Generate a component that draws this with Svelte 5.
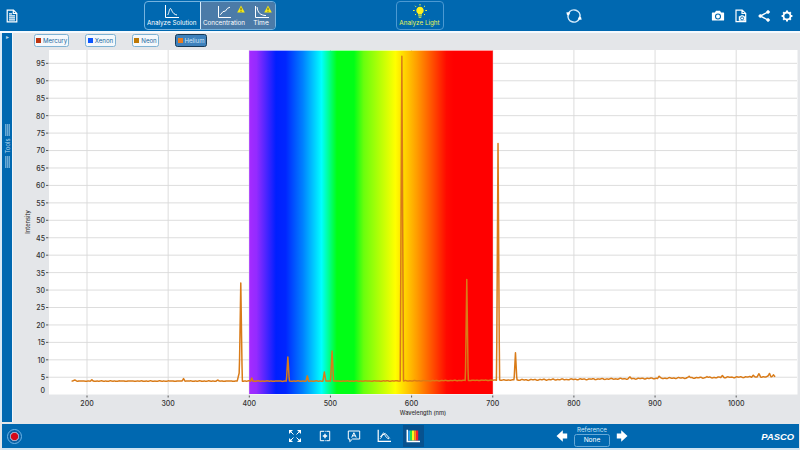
<script lang="ts">
	const series = [
		{ name: 'Mercury', color: '#bd3410', width: 35 },
		{ name: 'Xenon', color: '#0b55ff', width: 31 },
		{ name: 'Neon', color: '#bd7805', width: 27 },
		{ name: 'Helium', color: '#e87b22', width: 32 }
	]
	let selected = $state('Helium')

	const xTicks = [200, 300, 400, 500, 600, 700, 800, 900, 1000]
	const yTicks = Array.from({ length: 19 }, (_, i) => (i + 1) * 5)

	// [wavelength, intensity, half width at the base]
	const peaks = [
		[185, 4.2, 3],
		[206, 4.3, 1.5],
		[319, 4.6, 2],
		[361, 4.2, 2],
		[387.5, 6.2, 2.4],
		[389.5, 32, 1.8],
		[403, 4.8, 1.5],
		[447.5, 10.8, 1.8],
		[471.5, 5.4, 1.5],
		[492.5, 6.5, 1.8],
		[502, 12.5, 1.9],
		[588, 97, 2],
		[668, 33, 1.7],
		[706.5, 72, 1.8],
		[728, 12, 1.7],
		[869, 5.1, 2],
		[905, 5.3, 2],
		[942, 5.3, 2],
		[964, 5.2, 2],
		[983, 5.5, 2],
		[1021, 5.6, 2],
		[1028, 6, 2],
		[1041, 6.1, 2],
		[1046, 5.7, 2]
	]

	const x = (nm: number) => 87 + (nm - 200) * 0.8115
	const y = (value: number) => 394.7 - value * 3.488

	function baseline(nm: number) {
		const rise = nm > 520 ? ((nm - 520) / 530) ** 1.5 * 1.3 : 0
		const noise = Math.sin(nm * 0.83) * Math.sin(nm * 0.31) * (nm > 730 ? 0.16 : 0.08)
		return 3.9 + rise + noise
	}

	function intensity(nm: number) {
		let value = baseline(nm)
		for (const [center, top, half] of peaks) {
			const d = Math.abs(nm - center) / half
			if (d < 1) value = Math.max(value, top - (top - value) * d)
		}
		return value
	}

	const points: string[] = []
	for (let nm = 181; nm <= 1048; nm += 0.5) {
		points.push(`${x(nm).toFixed(2)},${y(intensity(nm)).toFixed(2)}`)
	}
</script>

{#snippet warning()}
	<svg class="warning" viewBox="0 0 8 8">
		<path d="M4 .4 7.8 7.5H.2z" fill="#f5ea18" />
		<path d="M4 2.7v2.5M4 5.9v.8" stroke="#514a0b" stroke-width=".9" />
	</svg>
{/snippet}

<div class="app">
	<header>
		<svg class="page" viewBox="0 0 12 14">
			<path d="M1.2 1.2h6.3l3.3 3.2v8.4H1.2z" />
			<path d="M7.3 1.2v3.3h3.5M3 4.8h3M3 6.8h6M3 8.8h6M3 10.8h6" />
		</svg>
		<nav>
			<button class="solution">
				<svg viewBox="0 0 15 14"><path d="M1.5 0v12.5H15M3.5 10C5 9 5.2 3.5 6.4 3.5S8 9.3 13 10" /></svg>
				<span>Analyze Solution</span>
			</button>
			<button class="concentration">
				<svg viewBox="0 0 15 14"><path d="M1.5 1v11.5H14M3.3 9.8 6 6.6l2.4-.5L10.5 3.3 13 2.2" /></svg>
				<span>Concentration</span>
				{@render warning()}
			</button>
			<button class="time">
				<svg viewBox="0 0 15 14"><path d="M1.5 1v11.5H15M3 2c.8 6 3.2 8.1 9 8.6" /></svg>
				<span>Time</span>
				{@render warning()}
			</button>
		</nav>
		<button class="light">
			<svg viewBox="0 0 14 15">
				<path d="M5 10.5v-1a3.7 3.7 0 1 1 4 0v1z" fill="#fff21c" stroke="none" />
				<path d="M5.2 11.8h3.6M5.7 13.3h2.6M7 0v1.5M2 1.8l1.1 1.1M12 1.8l-1.1 1.1M0 6.5h1.7M12.3 6.5H14M2 11l1.1-1M12 11l-1.1-1" />
			</svg>
			<span>Analyze Light</span>
		</button>
		<svg class="sync" viewBox="0 0 16 16">
			<path d="M2.6 5.4a6 6 0 0 1 11.3 3.8M13.4 10.6A6 6 0 0 1 2.1 6.8" />
			<path d="M.4 4.3 4.2 4.4 3 7.6.9 6.8zM15.6 11.7l-3.8-.1L13 8.4l2.1.8z" fill="#fff" stroke="none" />
		</svg>
		<div class="actions">
			<svg viewBox="0 0 14 14">
				<path d="M1.5 3.4h2.4L5 1.8h4l1.1 1.6h2.4a.6.6 0 0 1 .6.6v7a.6.6 0 0 1-.6.6h-11a.6.6 0 0 1-.6-.6V4a.6.6 0 0 1 .6-.6z" fill="#fff" stroke="none" />
				<circle cx="7" cy="7.5" r="2.5" stroke="#0068b0" stroke-width="1.1" />
			</svg>
			<svg viewBox="0 0 14 14">
				<path d="M5 12.7H2V1.1h6.2l3.5 3.3v8.3H5M8 1.1v3.4h3.7" stroke-width="1.2" />
				<path d="M4.8 7.2h1.5l.6-1h2.4l.6 1h1.6v4.6H4.8z" fill="#fff" stroke="none" />
				<circle cx="8.1" cy="9.4" r="1.5" stroke="#0068b0" stroke-width=".9" />
			</svg>
			<svg viewBox="0 0 14 14">
				<path d="M11 3 3.4 7l7.6 4" stroke-width="1.4" />
				<path d="M11 1.5a1.5 1.5 0 1 0 .1 0zM3.3 5.5a1.5 1.5 0 1 0 .1 0zM11 9.5a1.5 1.5 0 1 0 .1 0z" fill="#fff" stroke-width=".6" />
			</svg>
			<svg viewBox="0 0 14 14">
				<circle cx="7" cy="7" r="3.5" stroke-width="1.8" />
				<path d="M7 1.6v2M7 10.4v2M1.6 7h2M10.4 7h2M3.2 3.2l1.4 1.4M9.4 9.4l1.4 1.4M3.2 10.8l1.4-1.4M9.4 4.6l1.4-1.4" stroke-width="2" />
			</svg>
		</div>
	</header>

	<main>
		<aside>
			<span class="expand">▸</span>
			<div class="handle">
				<i></i>
				<span>Tools</span>
				<i></i>
			</div>
		</aside>
		<section>
			<div class="legend">
				{#each series as item}
					<button
						class:selected={selected === item.name}
						style:width="{item.width}px"
						onclick={() => (selected = item.name)}
					>
						<i style:background-color={item.color}></i>
						{item.name}
					</button>
				{/each}
			</div>
			<svg class="chart" viewBox="13 50 787 373">
				<defs>
					<linearGradient id="visible">
						<stop offset="0" stop-color="#a52bff" />
						<stop offset=".03" stop-color="#942bff" />
						<stop offset=".11" stop-color="#001fff" />
						<stop offset=".15" stop-color="#0026ff" />
						<stop offset=".22" stop-color="#0080ff" />
						<stop offset=".297" stop-color="#00ffff" />
						<stop offset=".36" stop-color="#00ff16" />
						<stop offset=".43" stop-color="#00ff16" />
						<stop offset=".47" stop-color="#69ff0d" />
						<stop offset=".6" stop-color="#ffff00" />
						<stop offset=".69" stop-color="#ff9b00" />
						<stop offset=".81" stop-color="#ff0900" />
						<stop offset=".84" stop-color="#ff0000" />
						<stop offset="1" stop-color="#ff0000" />
					</linearGradient>
				</defs>
				<rect class="plot" x="49" y="50" width="748.5" height="344.5" />
				<g class="grid">
					{#each yTicks as tick}
						<path d="M49 {y(tick)}H797" />
					{/each}
					{#each xTicks as tick}
						<path d="M{x(tick)} 50V394.5" />
					{/each}
				</g>
				<rect class="band" x="249.2" y="50.6" width="243.6" height="343.4" fill="url(#visible)" />
				<g class="ticks">
					{#each yTicks as tick}
						<path d="M46 {y(tick)}h2.4" />
						<text x="45" y={y(tick) + 2.9} text-anchor="end">{tick}</text>
					{/each}
					<text x="45" y="392.5" text-anchor="end">0</text>
					{#each xTicks as tick}
						<path d="M{x(tick)} 395.5v2" />
						<text x={x(tick)} y="405.8" text-anchor="middle">{tick}</text>
					{/each}
				</g>
				<polyline points={points.join(' ')} />
				<text class="axis" x="423" y="415" text-anchor="middle">Wavelength (nm)</text>
				<text class="axis" transform="translate(30.3 222) rotate(-90)" text-anchor="middle">Intensity</text>
			</svg>
		</section>
	</main>

	<footer>
		<button class="record" aria-label="Record"></button>
		<div class="tools">
			<svg viewBox="0 0 14 14">
				<path d="m1.5 1.5 4 4M12.5 1.5l-4 4M1.5 12.5l4-4M12.5 12.5l-4-4" />
				<path d="M1 5V1h4zM9 1h4v4zM1 9v4h4zM13 9v4H9z" fill="#fff" stroke="none" />
			</svg>
			<svg viewBox="0 0 14 14">
				<path d="M5 2.3H2.3v9.4H5M9 2.3h2.7v9.4H9" />
				<path d="M5 2.3h4M5 11.7h4" stroke-dasharray="1 .7" />
				<path d="M7 4.8v4.4M4.8 7h4.4" stroke-width="1.4" />
			</svg>
			<svg viewBox="0 0 14 14">
				<path d="M1.3 2h11.4v8H5.5l-2.7 2.7V10H1.3z" />
				<path d="m4.7 8.5 2.2-4.8 2.3 4.8M5.6 6.8h2.7" />
			</svg>
			<svg viewBox="0 0 14 14">
				<path d="M1.2.8v11.6H14" stroke-width="1.2" />
				<path d="M3 9.8C5.2 9 5 4 6.4 4S8 9 12 9.8M3.2 7.6l5-3.2 4.5 5" />
			</svg>
			<button class="active" aria-label="Spectrum">
				<svg viewBox="0 0 14 14">
					<path d="M3.2 1.5v10" stroke="#29a7f5" stroke-width="1.8" />
					<path d="M5 1.5v10" stroke="#29df42" stroke-width="2" />
					<path d="M7.2 1.5v10" stroke="#fff51e" stroke-width="2.4" />
					<path d="M9.2 1.5v10" stroke="#ff8d12" stroke-width="1.8" />
					<path d="M11.1 1.5v10" stroke="#f5202c" stroke-width="2.2" />
					<path d="M1.3.8v11.7H14" stroke-width="1.5" />
				</svg>
			</button>
		</div>
		<div class="reference">
			<svg viewBox="0 0 12 12"><path d="M.5 6 6.8.3v3.2h4.4v5H6.8v3.2z" /></svg>
			<label>
				<span>Reference</span>
				<button>None</button>
			</label>
			<svg viewBox="0 0 12 12"><path d="M11.5 6 5.2.3v3.2H.8v5h4.4v3.2z" /></svg>
		</div>
		<strong>PASCO</strong>
	</footer>
</div>

<style>
	:global(body) {
		margin: 0;
		background: #edf2f7;
	}

	.app {
		width: 800px;
		height: 450px;
		display: flex;
		flex-direction: column;
		overflow: hidden;
		font-family: Inter, 'Liberation Sans', sans-serif;
		background: #e4e6e9;
	}

	button {
		box-sizing: border-box;
		margin: 0;
		padding: 0;
		border: none;
		background: none;
		color: #fff;
		font: inherit;
	}

	svg {
		display: block;
		flex: none;
		fill: none;
		stroke: #fff;
		stroke-width: 1;
	}

	header {
		box-sizing: border-box;
		height: 33px;
		display: flex;
		align-items: center;
		border-bottom: 2px solid #f5faff;
		background: #0068b0;
		color: #fff;
		font-size: 6.6px;
	}

	.page {
		width: 12px;
		height: 14px;
		margin-left: 6px;
		stroke-width: 1.2;
	}

	nav {
		box-sizing: border-box;
		width: 131.5px;
		height: 29px;
		margin-left: 126px;
		display: flex;
		border: 1px solid #75b3df;
		border-radius: 4px;
		overflow: hidden;
	}

	nav button {
		position: relative;
		display: flex;
		flex-direction: column;
		align-items: center;
		padding-top: 3px;
		line-height: 9px;
		white-space: nowrap;
	}

	nav button > svg:first-child {
		width: 15px;
		height: 14px;
	}

	.solution {
		width: 55.5px;
		padding-right: 1px;
		border-right: 1px solid #d9ecfa;
		font-size: 6.3px;
	}

	.concentration {
		width: 47px;
		background: #4b7ba8;
		font-size: 6.3px;
	}

	.time {
		flex: 1;
		background: #4b7ba8;
	}

	.warning {
		position: absolute;
		top: 3px;
		right: 3px;
		width: 8px;
		height: 8px;
		stroke: none;
	}

	.light {
		width: 48px;
		height: 29px;
		margin-left: 120px;
		display: flex;
		flex-direction: column;
		align-items: center;
		padding-top: 2px;
		border: 1px solid #4b99d2;
		border-radius: 4px;
		color: #e9f455;
		font-size: 6.3px;
		line-height: 9px;
		white-space: nowrap;
	}

	.light svg {
		width: 14px;
		height: 15px;
		stroke: #e8f33e;
	}

	.sync {
		width: 16px;
		height: 16px;
		margin-left: 122.5px;
		stroke: #d3eafb;
		stroke-width: 1.5;
	}

	.actions {
		display: flex;
		gap: 9px;
		margin-left: 128.5px;
	}

	.actions svg {
		width: 14px;
		height: 14px;
	}

	main {
		height: 391px;
		display: flex;
	}

	aside {
		box-sizing: border-box;
		width: 13px;
		height: 389px;
		display: flex;
		flex-direction: column;
		align-items: center;
		border-left: 2px solid #d9e9f5;
		border-right: 1px solid #f1f6fb;
		background: #0068b0;
		color: #b9d9ef;
	}

	.expand {
		height: 7px;
		font-size: 6px;
		line-height: 7px;
	}

	.handle {
		margin-top: 84px;
		height: 44px;
		display: flex;
		flex-direction: column;
		align-items: center;
		gap: 2px;
	}

	.handle span {
		height: 17px;
		writing-mode: vertical-rl;
		transform: rotate(180deg);
		font-size: 6px;
		line-height: 9px;
		text-align: center;
	}

	.handle i {
		width: 5px;
		height: 12px;
		background: repeating-linear-gradient(90deg, #6aabd5 0 1px, #3987c0 1px 2px);
	}

	section {
		flex: 1;
	}

	.legend {
		height: 17px;
		box-sizing: border-box;
		display: flex;
		align-items: flex-start;
		gap: 16px;
		padding: 1px 0 0 21px;
	}

	.legend button {
		height: 13px;
		display: flex;
		align-items: center;
		justify-content: center;
		gap: 2px;
		border: 1px solid #7fb2d3;
		border-radius: 2.5px;
		background: #f4f8fb;
		color: #17669e;
		font-size: 6.1px;
		white-space: nowrap;
	}

	.legend i {
		width: 5px;
		height: 5px;
	}

	.legend .selected {
		border: 1.5px solid #173957;
		background: #3e81bc;
		color: #d2e8fa;
	}

	.chart {
		width: 787px;
		height: 373px;
	}

	.plot {
		fill: #fff;
		stroke: none;
	}

	.band {
		stroke: none;
	}

	.grid {
		stroke: #d9d9d9;
		stroke-width: 0.9;
	}

	.ticks {
		stroke: #333;
		stroke-width: 0.8;
	}

	.chart text {
		fill: #333;
		stroke: none;
		font-size: 7px;
		font-weight: 500;
	}

	.chart .axis {
		font-size: 5.7px;
	}

	polyline {
		stroke: #d97b18;
		stroke-width: 1.5;
		stroke-linejoin: round;
	}

	footer {
		box-sizing: border-box;
		height: 26px;
		margin: 0 1px 0 2px;
		display: flex;
		align-items: center;
		border-bottom: 2px solid #d0e4f2;
		background: #0068b0;
		color: #fff;
	}

	.record {
		width: 15px;
		height: 15px;
		margin-left: 5px;
		border: 1.5px solid #6db4e6;
		border-radius: 50%;
		background: radial-gradient(circle, #d60819 0 3.2px, #a3a5c4 4px 4.4px, #0b61a5 5px);
	}

	.tools {
		display: flex;
		align-items: center;
		gap: 15.5px;
		margin-left: 266px;
	}

	.tools svg {
		width: 14px;
		height: 14px;
	}

	.active {
		width: 21px;
		height: 22px;
		margin-left: -3.5px;
		padding: 4px 3px;
		background: #07528f;
	}

	.reference {
		height: 24px;
		display: flex;
		align-items: center;
		margin-left: 132.5px;
		gap: 6px;
	}

	.reference svg {
		width: 12px;
		height: 12px;
		fill: #fff;
		stroke: none;
	}

	label {
		display: flex;
		flex-direction: column;
		align-items: center;
		font-size: 6.2px;
		line-height: 9px;
		color: #cfe6f6;
	}

	label button {
		width: 36px;
		height: 13px;
		border: 1px solid #66a9d8;
		border-radius: 2.5px;
		color: #fff;
		font-size: 6.6px;
		line-height: 11px;
	}

	strong {
		margin-left: auto;
		margin-right: 5px;
		font-family: 'Liberation Sans', sans-serif;
		font-size: 9.4px;
		font-style: italic;
		font-weight: 700;
	}
</style>
